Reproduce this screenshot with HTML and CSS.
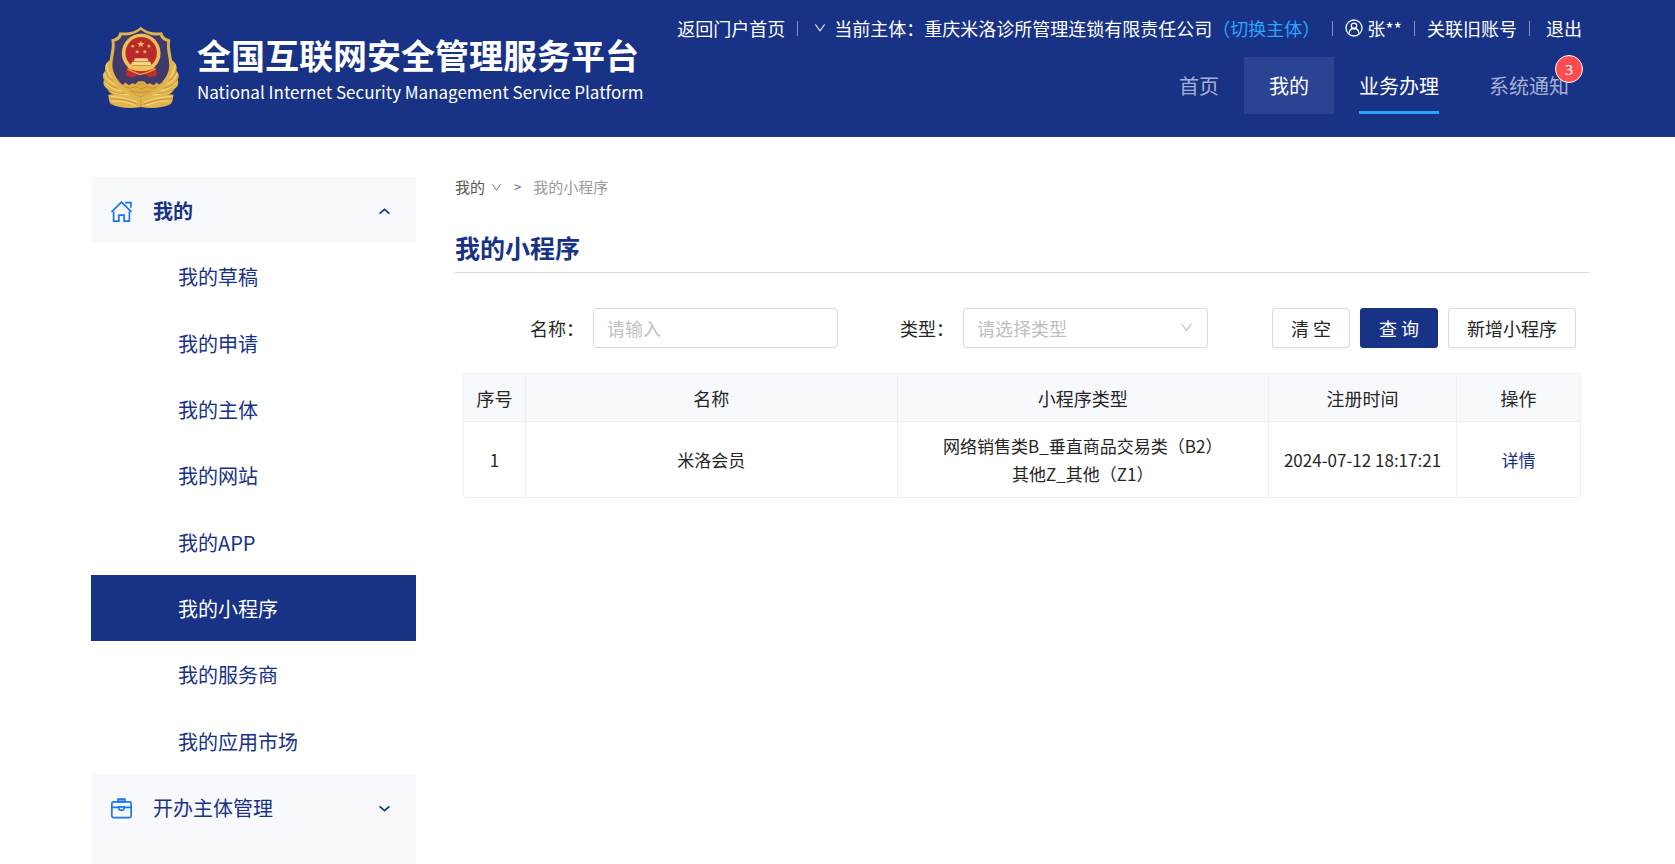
FILE: index.html
```html
<!DOCTYPE html>
<html lang="zh-CN">
<head>
<meta charset="utf-8">
<title>我的小程序</title>
<link rel="stylesheet" href="styles.css">
</head>
<body>
<svg class="defs" aria-hidden="true">
  <symbol id="down" viewBox="64 64 896 896"><path fill="currentColor" d="M884 256h-75c-5.100 0-9.900 2.500-12.900 6.600L512 654.200 227.900 262.600c-3-4.100-7.800-6.600-12.900-6.600h-75c-6.500 0-10.300 7.400-6.500 12.700l352.600 486.100c12.800 17.600 39 17.600 51.700 0l352.600-486.100c3.900-5.300.1-12.700-6.400-12.700z"/></symbol>
</svg>
<header class="header">
  <div class="brand">
    <svg class="emblem" viewBox="36 48 230 248" aria-hidden="true">
      <g fill="#e3b54c">
        <path d="M58 150C44 160 44 172 46 182C36 190 38 202 42 208C36 222 46 232 52 236C56 248 74 256 90 258L150 270L214 258C230 256 248 248 252 236C260 232 268 222 262 208C266 202 268 190 258 182C260 172 260 160 246 150Z"/>
        <path d="M54 254C66 248 90 256 112 257C130 258 142 262 152 266C162 262 174 258 192 257C214 256 238 248 250 254C246 264 250 272 240 282C216 294 180 296 152 290C124 296 88 294 64 282C54 272 58 264 54 254Z"/>
      </g>
      <path fill="#dfb44c" d="M152 50C138 64 115 70 88 67C86 78 78 86 64 88C70 120 52 150 60 184C70 222 104 250 152 268C200 250 234 222 244 184C252 150 234 120 240 88C226 86 218 78 216 67C189 70 166 64 152 50Z"/>
      <path fill="#403a6c" d="M152 59C137 72 116 78 95 76C92 87 84 93 73 95C78 124 62 152 69 181C79 215 110 241 152 260C194 241 225 215 235 181C242 152 226 124 231 95C220 93 212 87 209 76C188 78 167 72 152 59Z"/>
      <path fill="#dcae43" d="M90 218L98 224L106 217L116 225L126 219L136 222L144 213H162L170 222L180 219L190 225L199 217L207 223L214 218Q196 242 152 260Q108 242 90 218Z"/>
      <path fill="none" stroke="#b98a2f" stroke-width="2" d="M104 230L120 234L136 229L152 236L170 229L186 234L200 230M122 243L152 247L182 243M144 222H162"/>
      <circle cx="153" cy="129" r="58" fill="#eac25a"/>
      <circle cx="153" cy="128" r="47" fill="#ba2a2c"/>
      <path fill="#c6292c" d="M111 166Q130 183 153 182Q176 183 196 166L200 196L178 202L164 193H142L130 202L108 196Z"/>
      <path fill="none" stroke="#e4a344" stroke-width="4" d="M112 177L130 185L150 193L176 185L196 176"/>
      <path fill="#f1d589" d="M134 144H172L175 153H131ZM126 155H180L184 165H122Z"/>
      <path fill="#efc35a" d="M110 166H196L190 176Q153 190 116 176Z"/>
      <g fill="#edc15c"><path d="M152 92L155 99H163L157 104L159 111L152 107L145 111L147 104L141 99H149Z"/><path d="M128 103l2 3h4l-3 3 1 4-4-2-4 2 1-4-3-3h4zM176 103l2 3h4l-3 3 1 4-4-2-4 2 1-4-3-3h4zM141 120l2 3h4l-3 3 1 4-4-2-4 2 1-4-3-3h4zM164 120l2 3h4l-3 3 1 4-4-2-4 2 1-4-3-3h4z"/></g>
      <g fill="none" stroke="#f6d987" stroke-width="3" stroke-linecap="round">
        <path d="M50 165Q52 186 64 202M44 190Q50 212 74 222M46 216Q58 234 92 242M62 244Q84 252 116 254M254 165Q252 186 240 202M260 190Q254 212 230 222M258 216Q246 234 212 242M242 244Q220 252 188 254"/>
        <path d="M62 259Q102 260 140 275M66 272Q100 270 136 285M242 259Q202 260 164 275M238 272Q204 270 168 285"/>
      </g>
      <g fill="none" stroke="#b98628" stroke-width="2">
        <path d="M46 180Q50 200 68 212M42 207Q52 226 82 234M52 237Q74 250 104 250M258 180Q254 200 236 212M262 207Q252 226 222 234M252 237Q230 250 200 250M58 266Q100 264 144 282M246 266Q204 264 160 282M152 267V289"/>
      </g>
    </svg>
    <div class="brand-text">
      <div class="brand-title">全国互联网安全管理服务平台</div>
      <div class="brand-sub">National Internet Security Management Service Platform</div>
    </div>
  </div>
  <div class="header-right">
    <div class="topbar">
      <a href="#">返回门户首页</a>
      <i class="sep sep-wide"></i>
      <button class="subject" type="button"><svg class="icon-down"><use href="#down"/></svg>当前主体：重庆米洛诊所管理连锁有限责任公司</button><a class="switch" href="#">（切换主体）</a>
      <i class="sep"></i>
      <a class="user" href="#"><svg class="icon-user" viewBox="0 0 18 18" fill="none" stroke="currentColor" stroke-width="1.300"><circle cx="9" cy="9" r="8"/><circle cx="9" cy="6.800" r="2.700"/><path d="M4.300 14.500V13.500Q4.500 9.600 9 9.500Q13.500 9.600 13.700 13.500V14.500"/></svg>张**</a>
      <i class="sep"></i>
      <a href="#">关联旧账号</a>
      <i class="sep"></i>
      <a class="logout" href="#">退出</a>
    </div>
    <nav class="nav">
      <a href="#">首页</a>
      <a class="current" href="#">我的</a>
      <a class="underlined" href="#"><span>业务办理</span></a>
      <a href="#"><span class="notice">系统通知<b class="badge">3</b></span></a>
    </nav>
  </div>
</header>
<div class="page">
  <aside class="sidebar">
    <button class="group open" type="button">
      <svg class="group-icon" viewBox="0 0 20 20" fill="none" stroke="currentColor" stroke-width="1.600"><path d="M0.500 10.500L10 1L19.500 10.500M13.500 1.500H19V6.500M2.500 10V19.200H7.500V13.500H12.500V19.200H17.500V10"/></svg>
      <span>我的</span>
      <svg class="arrow" viewBox="0 0 10 6" fill="none" stroke="currentColor" stroke-width="1.500"><path d="M0.500 5L5 1L9.500 5"/></svg>
    </button>
    <ul class="menu">
      <li><a href="#">我的草稿</a></li>
      <li><a href="#">我的申请</a></li>
      <li><a href="#">我的主体</a></li>
      <li><a href="#">我的网站</a></li>
      <li><a href="#">我的APP</a></li>
      <li><a class="active" href="#">我的小程序</a></li>
      <li><a href="#">我的服务商</a></li>
      <li><a href="#">我的应用市场</a></li>
    </ul>
    <div class="rest">
      <button class="group" type="button">
        <svg class="group-icon" viewBox="0 0 20 20" fill="none" stroke="currentColor" stroke-width="1.600"><rect x="0.800" y="3.700" width="18.400" height="15" rx="1.500"/><path fill="#8ab8f8" d="M6.700 3.500V1H13.300V3.500Z"/><path d="M1 9H7.500M12.500 9H19M7.500 8.500H12.500V10Q12 11.800 10 11.800Q8 11.800 7.500 10Z"/></svg>
        <span>开办主体管理</span>
        <svg class="arrow" viewBox="0 0 10 6" fill="none" stroke="currentColor" stroke-width="1.500"><path d="M0.500 1L5 5L9.500 1"/></svg>
      </button>
    </div>
  </aside>
  <main class="content">
    <nav class="crumbs">
      <a href="#">我的<svg class="icon-down"><use href="#down"/></svg></a>
      <span class="gt">&gt;</span>
      <span class="here">我的小程序</span>
    </nav>
    <h1 class="title">我的小程序</h1>
    <form class="filters">
      <div class="field">
        <label for="name">名称：</label>
        <input id="name" type="text" placeholder="请输入">
      </div>
      <div class="field">
        <label for="type">类型：</label>
        <div class="select">
          <select id="type"><option>请选择类型</option></select>
          <svg class="icon-down"><use href="#down"/></svg>
        </div>
      </div>
      <div class="buttons">
        <button class="btn" type="reset">清 空</button>
        <button class="btn primary" type="button">查 询</button>
        <button class="btn" type="button">新增小程序</button>
      </div>
    </form>
    <table class="table">
      <colgroup><col class="c-no"><col><col><col class="c-time"><col class="c-op"></colgroup>
      <thead><tr><th>序号</th><th>名称</th><th>小程序类型</th><th>注册时间</th><th>操作</th></tr></thead>
      <tbody><tr><td>1</td><td>米洛会员</td><td>网络销售类B_垂直商品交易类（B2）<br>其他Z_其他（Z1）</td><td>2024-07-12 18:17:21</td><td><a href="#">详情</a></td></tr></tbody>
    </table>
  </main>
</div>
</body>
</html>
```
FILE: styles.css
```css
* { box-sizing: border-box; }

:root {
  --navy: #183286;
  --sky: #2ba3ff;
  --pale: #f8f9fd;
  --line: #efefef;
}

body {
  margin: 0;
  min-height: 100vh;
  display: flex;
  flex-direction: column;
  background: #fff;
  color: #262626;
  font-family: "Noto Sans CJK SC", sans-serif;
  font-size: 18px;
  line-height: 28px;
}

a { color: inherit; text-decoration: none; }
button { font: inherit; color: inherit; border: 0; background: none; padding: 0; cursor: pointer; }
svg { flex: none; }
.defs { display: none; }
.icon-down { width: 12px; height: 12px; }

.header {
  display: flex;
  justify-content: space-between;
  height: 137px;
  padding: 0 81px 0 102px;
  background: var(--navy);
  color: #fff;
  white-space: nowrap;
}
.brand { display: flex; gap: 18px; padding-top: 26px; }
.emblem { width: 77px; height: 83px; }
.brand-text { padding-top: 7px; }
.brand-title { font-size: 34px; line-height: 44px; font-weight: 700; }
.brand-sub { font-size: 17px; line-height: 30px; }

.header-right { display: flex; flex-direction: column; align-items: flex-end; padding-top: 14px; }
.topbar { display: flex; align-items: center; height: 28px; padding-right: 12px; }
.sep { width: 1px; height: 15px; margin: 0 12px; background: #8290bd; }
.sep-wide { margin-right: 16px; }
.subject { display: flex; align-items: center; gap: 8px; }
.user { display: flex; align-items: center; gap: 4px; }
.icon-user { width: 18px; height: 18px; }
.logout { padding-left: 4px; }
.switch { color: var(--sky); }

.nav { display: flex; margin-top: 15px; font-size: 20px; line-height: 57px; }
.nav a { padding: 0 25px; color: #a6b0d1; }
.nav .current { color: #fff; background: #2a4393; }
.nav .underlined { color: #fff; }
.underlined span { display: block; box-shadow: inset 0 -3px var(--sky); }
.notice { position: relative; display: block; }
.badge {
  position: absolute;
  top: -2px;
  right: -14px;
  width: 28px;
  height: 28px;
  border: 1px solid #fff;
  border-radius: 50%;
  background: #ff4d4f;
  color: #fff;
  font: 15px/26px "Open Sans", sans-serif;
  text-align: center;
}

.page { flex: 1; display: flex; gap: 39px; padding: 40px 86px 0 91px; }
.sidebar { width: 325px; flex: none; display: flex; flex-direction: column; color: var(--navy); font-size: 20px; }
.group {
  display: flex;
  align-items: center;
  gap: 21px;
  width: 100%;
  height: 66px;
  padding: 2px 26px 0 20px;
  background: var(--pale);
  text-align: left;
}
.group span { flex: 1; }
.open { font-weight: 700; }
.group-icon { width: 21px; height: 21px; color: #1677f0; }
.arrow { width: 11px; height: 7px; }
.menu { list-style: none; margin: 0; padding: 0; height: 531px; display: grid; grid-auto-rows: 1fr; }
.menu a { display: flex; align-items: center; height: 100%; padding: 2px 0 0 87px; }
.menu .active { background: var(--navy); color: #fff; }
.rest { flex: 1; background: var(--pale); }

.content { flex: 1; min-width: 0; }
.crumbs { display: flex; align-items: center; height: 20px; font-size: 15px; color: #555; }
.crumbs a { display: flex; align-items: center; gap: 6px; }
.crumbs .icon-down { color: #888; width: 11px; height: 11px; }
.gt { margin: 0 12px; font-size: 13px; color: #5468b5; }
.here { color: #999; }
.title {
  margin: 31px 0 35px;
  padding-bottom: 5px;
  border-bottom: 1px solid #ddd;
  color: var(--navy);
  font-size: 25px;
  line-height: 39px;
}

.filters { display: flex; gap: 62px; padding: 0 13px 0 75px; }
.field { flex: 1; min-width: 0; display: flex; align-items: center; }
.field label { width: 63px; flex: none; white-space: nowrap; }
.field input, .field select {
  width: 100%;
  height: 40px;
  padding: 0 13px;
  border: 1px solid #d9d9d9;
  border-radius: 3px;
  background: #fff;
  font: inherit;
  color: #bfbfbf;
}
.field input { color: #262626; }
.field input::placeholder { color: #bfbfbf; }
.field select { appearance: none; }
.select { position: relative; flex: 1; }
.select .icon-down { position: absolute; right: 15px; top: 13px; width: 13px; height: 13px; color: #bfbfbf; pointer-events: none; }
.buttons { display: flex; gap: 10px; padding-left: 2px; }
.btn {
  height: 40px;
  padding: 0 18px;
  border: 1px solid #d9d9d9;
  border-radius: 3px;
  background: #fff;
  box-shadow: 0 2px 0 rgba(0, 0, 0, .02);
  white-space: nowrap;
}
.primary { background: var(--navy); border-color: var(--navy); color: #fff; }

.table {
  width: calc(100% - 16px);
  margin: 25px 8px 0;
  table-layout: fixed;
  border-collapse: separate;
  border-spacing: 0;
  border: 1px solid var(--line);
  border-right: 0;
  border-radius: 3px;
  text-align: center;
}
.c-no { width: 62px; }
.c-time { width: 188px; }
.c-op { width: 124px; }
.table th, .table td { padding: 0; border-right: 1px solid var(--line); font-weight: 400; }
.table th { height: 48px; background: var(--pale); border-bottom: 1px solid var(--line); }
.table td { height: 75px; font-size: 17px; }
.table a { color: var(--navy); }
```
